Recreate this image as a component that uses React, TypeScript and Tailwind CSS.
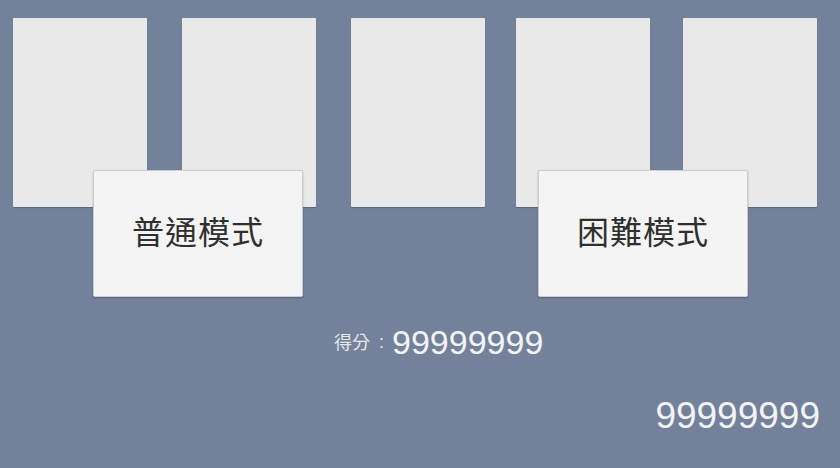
import React from 'react';

const cardOffsets = ['ml-[13px]', 'ml-[35px]', 'ml-[35px]', 'ml-[31px]', 'ml-[33px]'];

const ModeButton: React.FC<{ label: string; className?: string }> = ({ label, className }) => (
  <button
    className={`w-[210px] h-[127px] bg-[#f4f4f4] border border-[#c9ccd3] rounded-[2px] shadow-[0_1px_2px_rgba(0,0,0,0.25)] flex items-center justify-center pb-[8px] text-[32px] leading-none text-[#2f2f2f] tracking-[1px] ${className ?? ''}`}
    style={{ fontFamily: '"Noto Sans CJK TC", "Noto Sans CJK SC", sans-serif' }}
  >
    {label}
  </button>
);

const App: React.FC = () => (
  <div className="w-[840px] h-[468px] bg-[#73819b] overflow-hidden flex flex-col">
    <div className="flex pt-[18px]">
      {cardOffsets.map((ml, i) => (
        <div
          key={i}
          className={`${ml} w-[134px] h-[189px] bg-[#e9e9e9] rounded-[1px] shadow-[0_1px_1px_rgba(0,0,0,0.2)]`}
        />
      ))}
    </div>

    <div className="flex mt-[-37px] pl-[93px] relative">
      <ModeButton label="普通模式" />
      <ModeButton label="困難模式" className="ml-[235px]" />
    </div>

    <div
      className="flex items-center pl-[334px] mt-[28px] text-[#f2f3f6]"
      style={{ fontFamily: '"Liberation Sans", "Noto Sans CJK TC", sans-serif' }}
    >
      <span className="text-[18px] leading-none text-[#e4e7ee] pb-[3px]" style={{ fontFamily: '"Noto Sans CJK TC", sans-serif' }}>
        得分
      </span>
      <span className="text-[18px] leading-none text-[#e4e7ee] ml-[9px] mr-[8px]">:</span>
      <span className="text-[34px] leading-none">99999999</span>
    </div>

    <div
      className="flex justify-end pr-[20px] mt-[38px] text-[37px] leading-none text-[#f2f3f6]"
      style={{ fontFamily: '"Liberation Sans", sans-serif' }}
    >
      99999999
    </div>
  </div>
);

export default App;
